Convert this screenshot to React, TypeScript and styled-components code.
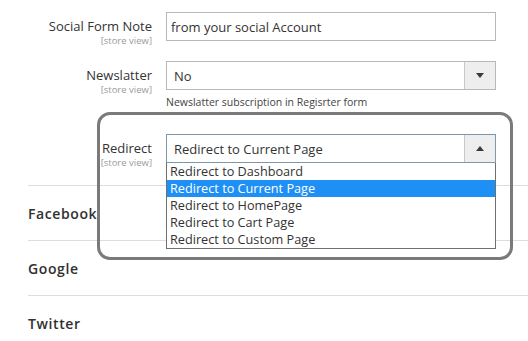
import React from 'react';
import styled, { createGlobalStyle } from 'styled-components';

const GlobalStyle = createGlobalStyle`
  html, body {
    margin: 0;
    padding: 0;
    background: #ffffff;
  }
  body {
    font-family: "Open Sans", "Noto Sans", Arial, sans-serif;
    color: #333333;
  }
`;

const Page = styled.div`
  position: relative;
  width: 528px;
  height: 341px;
  overflow: hidden;
  padding-top: 12px;
  box-sizing: border-box;
`;

const Form = styled.div`
  padding-left: 28px;
`;

const Row = styled.div<{ $gap: number }>`
  position: relative;
  display: grid;
  grid-template-columns: 124px 330px;
  column-gap: 14px;
  margin-bottom: ${(p) => p.$gap}px;
`;

const LabelCell = styled.div`
  display: flex;
  flex-direction: column;
  align-items: flex-end;
  padding-top: 5px;
  white-space: nowrap;
`;

const Label = styled.span`
  font-size: 13px;
  line-height: 18px;
  color: #333333;
`;

const Scope = styled.span`
  font-size: 9.5px;
  line-height: 11px;
  color: #9a9a9a;
`;

const Control = styled.div`
  position: relative;
`;

const TextInput = styled.div`
  height: 29px;
  box-sizing: border-box;
  border: 1px solid #b8b8b8;
  padding: 0 4px;
  display: flex;
  align-items: center;
  font-size: 13px;
  color: #333333;
`;

const Select = styled.div<{ $focused?: boolean }>`
  height: 29px;
  box-sizing: border-box;
  border: 1px solid ${(p) => (p.$focused ? '#7f97aa' : '#b8b8b8')};
  display: flex;
  align-items: stretch;
  font-size: 13px;
  color: #333333;
`;

const SelectValue = styled.div<{ $indent: number }>`
  flex: 1;
  display: flex;
  align-items: center;
  padding-left: ${(p) => p.$indent}px;
`;

const ArrowBox = styled.div`
  width: 30px;
  border-left: 1px solid #c8c8c8;
  background: #eeeeee;
  display: flex;
  align-items: center;
  justify-content: center;
`;

const Note = styled.div`
  margin-top: 5px;
  font-size: 10.5px;
  line-height: 14px;
  color: #444444;
`;

const OptionList = styled.ul`
  position: absolute;
  top: 29px;
  left: 0;
  right: 0;
  margin: 0;
  padding: 0;
  list-style: none;
  background: #ffffff;
  border: 1px solid #6f6f6f;
  border-top: none;
  z-index: 2;
`;

const Option = styled.li<{ $active?: boolean }>`
  height: 17px;
  line-height: 17px;
  padding-left: 3px;
  font-size: 12.7px;
  background: ${(p) => (p.$active ? '#1e90f5' : 'transparent')};
  color: ${(p) => (p.$active ? '#ffffff' : '#333333')};
`;

const Section = styled.div`
  height: 55px;
  box-sizing: border-box;
  margin-left: 28px;
  border-top: 1px solid #dddddd;
  display: flex;
  align-items: center;
  font-size: 14px;
  font-weight: 600;
  letter-spacing: 0.6px;
  color: #303030;
`;

const Highlight = styled.div`
  position: absolute;
  left: 97px;
  top: 112px;
  width: 416px;
  height: 148px;
  box-sizing: border-box;
  border: 3px solid #7a7a7a;
  border-radius: 13px;
  pointer-events: none;
  z-index: 3;
`;

const Caret = ({ up }: { up?: boolean }) => (
  <svg width="8" height="5" viewBox="0 0 8 5">
    <path d={up ? 'M0 5 L4 0 L8 5 Z' : 'M0 0 L8 0 L4 5 Z'} fill="#3a3a3a" />
  </svg>
);

const options = [
  'Redirect to Dashboard',
  'Redirect to Current Page',
  'Redirect to HomePage',
  'Redirect to Cart Page',
  'Redirect to Custom Page',
];

const App = () => {
  return (
    <Page>
      <GlobalStyle />
      <Form>
        <Row $gap={15}>
          <LabelCell>
            <Label>Social Form Note</Label>
            <Scope>[store view]</Scope>
          </LabelCell>
          <Control>
            <TextInput>from your social Account</TextInput>
          </Control>
        </Row>
        <Row $gap={25}>
          <LabelCell>
            <Label>Newslatter</Label>
            <Scope>[store view]</Scope>
          </LabelCell>
          <Control>
            <Select>
              <SelectValue $indent={7}>No</SelectValue>
              <ArrowBox>
                <Caret />
              </ArrowBox>
            </Select>
            <Note>Newslatter subscription in Regisrter form</Note>
          </Control>
        </Row>
        <Row $gap={17}>
          <LabelCell>
            <Label>Redirect</Label>
            <Scope>[store view]</Scope>
          </LabelCell>
          <Control>
            <Select $focused>
              <SelectValue $indent={7}>Redirect to Current Page</SelectValue>
              <ArrowBox>
                <Caret up />
              </ArrowBox>
            </Select>
            <OptionList>
              {options.map((o) => (
                <Option key={o} $active={o === 'Redirect to Current Page'}>
                  {o}
                </Option>
              ))}
            </OptionList>
          </Control>
        </Row>
      </Form>
      <Section>Facebook</Section>
      <Section>Google</Section>
      <Section>Twitter</Section>
      <Highlight />
    </Page>
  );
};

export default App;
